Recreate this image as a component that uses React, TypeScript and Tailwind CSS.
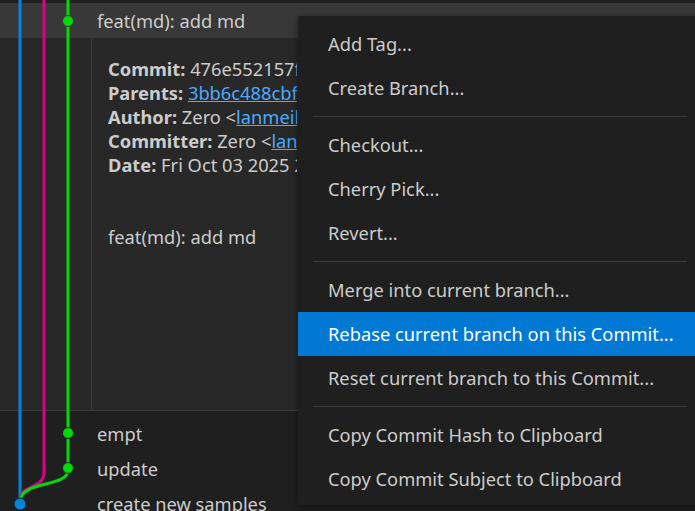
import React from 'react'

const MENU_GROUPS = [
  ['Add Tag...', 'Create Branch...'],
  ['Checkout...', 'Cherry Pick...', 'Revert...'],
  [
    'Merge into current branch...',
    'Rebase current branch on this Commit...',
    'Reset current branch to this Commit...',
  ],
  ['Copy Commit Hash to Clipboard', 'Copy Commit Subject to Clipboard'],
]

const ACTIVE = 'Rebase current branch on this Commit...'

function Graph() {
  return (
    <svg className="pointer-events-none absolute left-0 top-0" width="91" height="511">
      <path d="M20 0 V504" stroke="#0085d9" strokeWidth="3" fill="none" />
      <path d="M44 0 V472 C44 490 20 484 20 500" stroke="#d9008f" strokeWidth="3" fill="none" />
      <path d="M68 0 V470 C68 488 20 480 20 502" stroke="#00d90a" strokeWidth="3" fill="none" />
      <circle cx="68" cy="21" r="5.5" fill="#00d90a" stroke="#383838" strokeWidth="1" />
      <circle cx="68" cy="433" r="5.5" fill="#00d90a" stroke="#1f1f1f" strokeWidth="1" />
      <circle cx="68" cy="468" r="5.5" fill="#00d90a" stroke="#1f1f1f" strokeWidth="1" />
      <circle cx="20" cy="504" r="6" fill="#0085d9" stroke="#1f1f1f" strokeWidth="1" />
    </svg>
  )
}

function Detail({ label, children }: { label: string; children: React.ReactNode }) {
  return (
    <div className="whitespace-nowrap">
      <span className="font-bold">{label}</span> {children}
    </div>
  )
}

function ContextMenu() {
  return (
    <div className="absolute left-[298px] top-[16px] w-[404px] bg-[#1f1f1f] pb-[4px] pt-[6px] shadow-[0_2px_8px_rgba(0,0,0,0.45)]">
      {MENU_GROUPS.map((group, i) => (
        <div key={i}>
          {i > 0 && (
            <div className="flex h-[13px] items-center px-[15px]">
              <div className="h-px w-full bg-[#3c3c3c]" />
            </div>
          )}
          {group.map((item) => (
            <div
              key={item}
              className={`flex h-[44px] items-center pl-[30px] ${
                item === ACTIVE ? 'bg-[#0078d4] text-white' : 'text-[#cccccc]'
              }`}
            >
              {item}
            </div>
          ))}
        </div>
      ))}
    </div>
  )
}

export default function App() {
  return (
    <div className="relative h-[511px] w-[695px] overflow-hidden bg-[#1f1f1f] font-['Noto_Sans',sans-serif] text-[18.3px] text-[#cccccc]">
      <div className="h-[3px]" />
      <div className="flex h-[35px] items-center bg-[#383838] pl-[97px]">feat(md): add md</div>

      <div className="flex h-[373px] border-b border-[#3c3c3c] bg-[#282828]">
        <div className="w-[91px] shrink-0" />
        <div className="w-[206px] overflow-hidden border-l border-[#3a3a3a] pl-[16px] pt-[19px] leading-[24px]">
          <Detail label="Commit:">476e552157fa3c1d9e08</Detail>
          <Detail label="Parents:">
            <span className="text-[#4daafc] underline">3bb6c488cbf1</span>
          </Detail>
          <Detail label="Author:">
            Zero &lt;<span className="text-[#4daafc] underline">lanmeihuan@outlook.com</span>&gt;
          </Detail>
          <Detail label="Committer:">
            Zero &lt;<span className="text-[#4daafc] underline">lanmeihuan@outlook.com</span>&gt;
          </Detail>
          <Detail label="Date:">Fri Oct 03 2025 21:14:08</Detail>
          <div className="mt-[48px]">feat(md): add md</div>
        </div>
      </div>

      <div className="pt-[5px]">
        {['empt', 'update', 'create new samples'].map((msg) => (
          <div key={msg} className="flex h-[35px] items-center pl-[97px]">
            {msg}
          </div>
        ))}
      </div>

      <Graph />
      <ContextMenu />
    </div>
  )
}
